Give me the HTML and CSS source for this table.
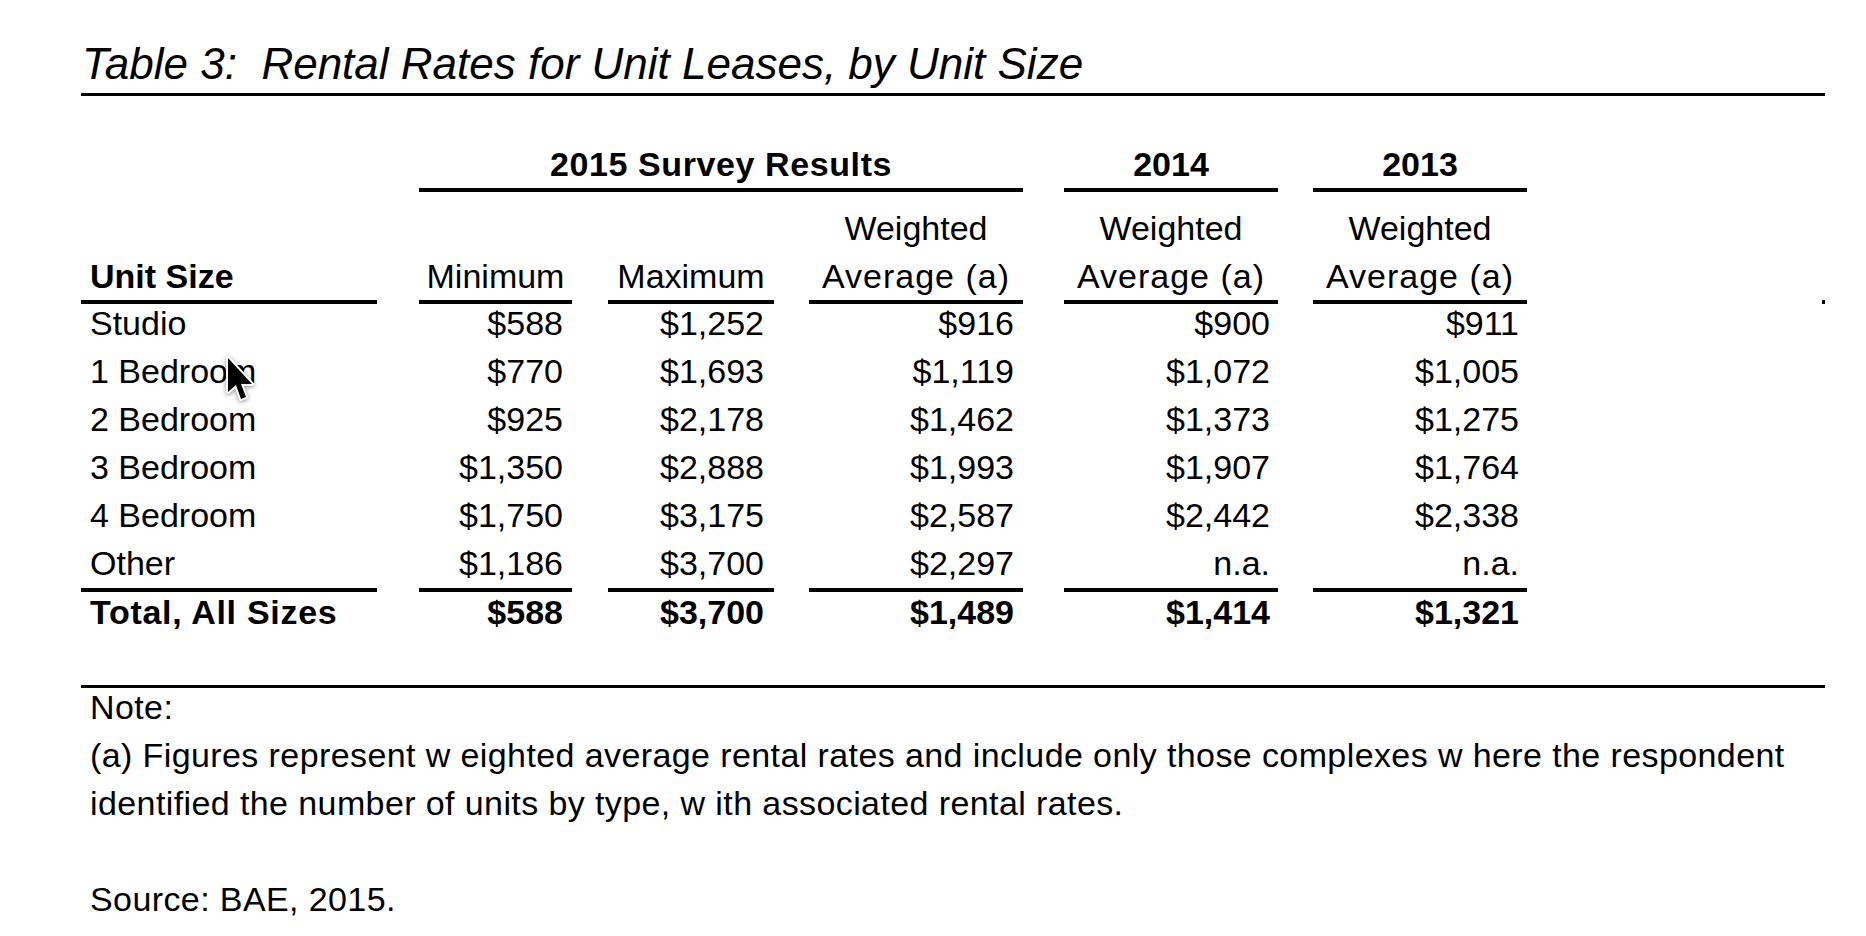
FILE: index.html
```html
<!DOCTYPE html>
<html lang="en">
<head>
<meta charset="utf-8">
<title>Table 3: Rental Rates for Unit Leases, by Unit Size</title>
<link rel="stylesheet" href="styles.css">
</head>
<body>
<div class="page">
  <h1 class="title">Table 3:&nbsp; Rental Rates for Unit Leases, by Unit Size</h1>

  <div class="tbl">
    <div class="row group">
      <div class="c1"></div>
      <div class="span ruled">2015 Survey Results</div>
      <div class="c5 ruled">2014</div>
      <div class="c6 ruled">2013</div>
    </div>

    <div class="row head">
      <div class="c1 ruled hl">Unit Size</div>
      <div class="c2 ruled">Minimum</div>
      <div class="c3 ruled">Maximum</div>
      <div class="c4 ruled"><span>Weighted</span><span class="avg">Average (a)</span></div>
      <div class="c5 ruled"><span>Weighted</span><span class="avg">Average (a)</span></div>
      <div class="c6 ruled"><span>Weighted</span><span class="avg">Average (a)</span></div>
    </div>

    <div class="body">
      <div class="row data">
        <div class="c1">Studio</div>
        <div class="c2 num">$588</div>
        <div class="c3 num">$1,252</div>
        <div class="c4 num">$916</div>
        <div class="c5 num">$900</div>
        <div class="c6 num">$911</div>
      </div>
      <div class="row data">
        <div class="c1">1 Bedroom</div>
        <div class="c2 num">$770</div>
        <div class="c3 num">$1,693</div>
        <div class="c4 num">$1,119</div>
        <div class="c5 num">$1,072</div>
        <div class="c6 num">$1,005</div>
      </div>
      <div class="row data">
        <div class="c1">2 Bedroom</div>
        <div class="c2 num">$925</div>
        <div class="c3 num">$2,178</div>
        <div class="c4 num">$1,462</div>
        <div class="c5 num">$1,373</div>
        <div class="c6 num">$1,275</div>
      </div>
      <div class="row data">
        <div class="c1">3 Bedroom</div>
        <div class="c2 num">$1,350</div>
        <div class="c3 num">$2,888</div>
        <div class="c4 num">$1,993</div>
        <div class="c5 num">$1,907</div>
        <div class="c6 num">$1,764</div>
      </div>
      <div class="row data">
        <div class="c1">4 Bedroom</div>
        <div class="c2 num">$1,750</div>
        <div class="c3 num">$3,175</div>
        <div class="c4 num">$2,587</div>
        <div class="c5 num">$2,442</div>
        <div class="c6 num">$2,338</div>
      </div>
      <div class="row data last">
        <div class="c1">Other</div>
        <div class="c2 num">$1,186</div>
        <div class="c3 num">$3,700</div>
        <div class="c4 num">$2,297</div>
        <div class="c5 num">n.a.</div>
        <div class="c6 num">n.a.</div>
      </div>
      <div class="row total">
        <div class="c1">Total, All Sizes</div>
        <div class="c2 num">$588</div>
        <div class="c3 num">$3,700</div>
        <div class="c4 num">$1,489</div>
        <div class="c5 num">$1,414</div>
        <div class="c6 num">$1,321</div>
      </div>
    </div>
  </div>

  <div class="notes">
    <div class="notes-body">
      <div class="line">Note:</div>
      <div class="line">(a) Figures represent w eighted average rental rates and include only those complexes w here the respondent</div>
      <div class="line">identified the number of units by type, w ith associated rental rates.</div>
      <div class="line source">Source: BAE, 2015.</div>
    </div>
  </div>

  <span class="mark"></span>

  <svg class="cursor" width="34" height="52" viewBox="0 0 34 52" aria-hidden="true">
    <path d="M4 4 L4 38 L12 31 L17 45 L22 43 L17 30 L28 30 Z" fill="#fff" stroke="#fff" stroke-width="4" stroke-linejoin="round"/>
    <path d="M4 4 L4 38 L12 31 L17 45 L22 43 L17 30 L28 30 Z" fill="#000"/>
  </svg>
</div>
</body>
</html>
```

FILE: styles.css
```css
* {
  box-sizing: border-box;
}

html,
body {
  margin: 0;
  padding: 0;
  background: #fff;
}

body {
  font-family: "Liberation Sans", Arial, Helvetica, sans-serif;
  color: #000;
}

.page {
  position: relative;
  width: 1866px;
  height: 936px;
  padding: 40px 0 0 81px;
  overflow: hidden;
}

.title {
  margin: 0;
  width: 1744px;
  padding: 0 0 5px 1px;
  font-size: 44px;
  font-weight: normal;
  font-style: italic;
  line-height: 48px;
  border-bottom: 3px solid #000;
}

.tbl {
  margin-top: 45px;
}

.row {
  display: flex;
  font-size: 34px;
}

.c1 {
  width: 296px;
  padding-left: 9px;
}

.c2 {
  margin-left: 42px;
  width: 153px;
}

.c3 {
  margin-left: 36px;
  width: 166px;
}

.c4 {
  margin-left: 35px;
  width: 214px;
}

.c5 {
  margin-left: 41px;
  width: 214px;
}

.c6 {
  margin-left: 35px;
  width: 214px;
}

.span {
  margin-left: 42px;
  width: 604px;
}

.ruled {
  border-bottom: 4px solid #000;
}

.group {
  line-height: 47px;
  font-weight: bold;
  text-align: center;
}

.group .span {
  letter-spacing: 0.6px;
}

.head {
  line-height: 48px;
}

.head > div {
  padding-top: 12px;
  display: flex;
  flex-direction: column;
  justify-content: flex-end;
  align-items: center;
  white-space: nowrap;
}

.head > .hl {
  align-items: flex-start;
  font-weight: bold;
}

.avg {
  letter-spacing: 1px;
}

.body {
  margin-top: -5px;
}

.data {
  line-height: 48px;
}

.num {
  text-align: right;
  padding-right: 9px;
}

.c3.num {
  padding-right: 10px;
}

.c5.num,
.c6.num {
  padding-right: 8px;
}

.last > div {
  padding-bottom: 1px;
  border-bottom: 4px solid #000;
}

.total {
  line-height: 40px;
  font-weight: bold;
}

.total .c1 {
  letter-spacing: 0.7px;
}

.notes {
  margin-top: 53px;
  width: 1744px;
  border-top: 3px solid #000;
}

.notes-body {
  margin-top: -5px;
  padding-left: 9px;
  font-size: 34px;
  line-height: 48px;
  letter-spacing: 0.4px;
}

.line {
  white-space: nowrap;
}

.source {
  margin-top: 48px;
}

.mark {
  position: absolute;
  left: 1822px;
  top: 300px;
  width: 3px;
  height: 4px;
  background: #000;
}

.cursor {
  position: absolute;
  left: 224px;
  top: 354px;
  filter: drop-shadow(0 1px 2px rgba(0, 0, 0, 0.45));
}
```
